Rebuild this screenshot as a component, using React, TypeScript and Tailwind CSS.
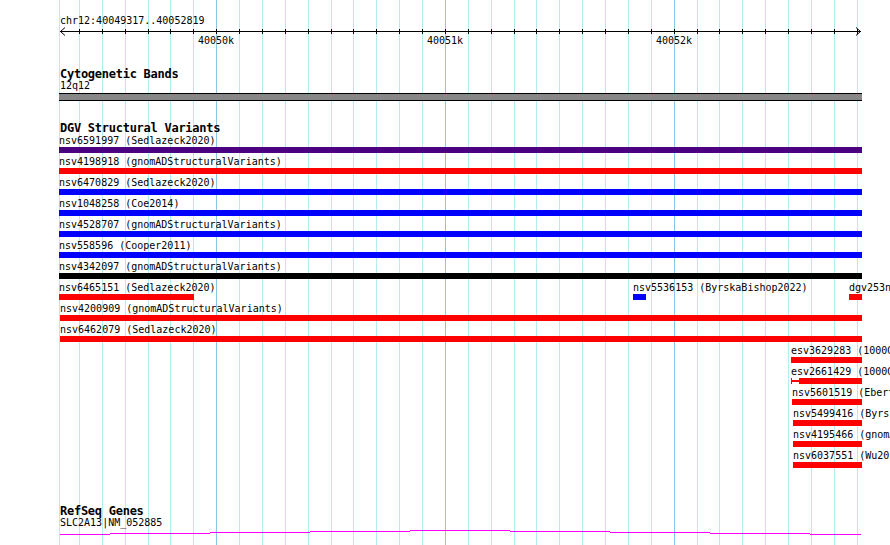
import React from "react";

// visible window
const START = 40049317;
const LEFT = 60;
const RIGHT = 862;
const SCALE = 0.22873; // px per bp

const toX = (bp: number) => Math.round(LEFT + (bp - START) * SCALE);

const minor = Array.from({ length: 35 }, (_, i) => 40049400 + i * 100);
const major = [40050000, 40051000, 40052000];

type Feature = {
  label: string;
  x: number;
  end: number;
  color: string;
  whisker?: number; // thin leading part, up to this x
};

const full = (label: string, color: string, x = 59): Feature[] => [{ label, x, end: RIGHT, color }];

const dgvRows: Feature[][] = [
  full("nsv6591997 (Sedlazeck2020)", "#4b0082"),
  full("nsv4198918 (gnomADStructuralVariants)", "#ff0000"),
  full("nsv6470829 (Sedlazeck2020)", "#0000ff"),
  full("nsv1048258 (Coe2014)", "#0000ff"),
  full("nsv4528707 (gnomADStructuralVariants)", "#0000ff"),
  full("nsv558596 (Cooper2011)", "#0000ff"),
  full("nsv4342097 (gnomADStructuralVariants)", "#000000"),
  [
    { label: "nsv6465151 (Sedlazeck2020)", x: 59, end: 194, color: "#ff0000" },
    { label: "nsv5536153 (ByrskaBishop2022)", x: 633, end: 646, color: "#0000ff" },
    { label: "dgv253n67 (Zarrei2015)", x: 849, end: RIGHT, color: "#ff0000" },
  ],
  full("nsv4200909 (gnomADStructuralVariants)", "#ff0000", 60),
  full("nsv6462079 (Sedlazeck2020)", "#ff0000", 60),
  full("esv3629283 (1000GenomesPhase3)", "#ff0000", 791),
  [{ label: "esv2661429 (1000GenomesPilot)", x: 791, end: RIGHT, color: "#ff0000", whisker: 799 }],
  full("nsv5601519 (Ebert2021)", "#ff0000", 792),
  full("nsv5499416 (ByrskaBishop2022)", "#ff0000", 793),
  full("nsv4195466 (gnomADStructuralVariants)", "#ff0000", 793),
  full("nsv6037551 (Wu2021)", "#ff0000", 793),
];

// gene model drawn as a shallow arch, one px step per 100px
const geneSteps = [
  [60, 110, 534],
  [110, 210, 533],
  [210, 310, 532],
  [310, 410, 531],
  [410, 510, 530],
  [510, 610, 531],
  [610, 710, 532],
  [710, 810, 533],
  [810, 861, 534],
];

function Grid() {
  return (
    <svg className="pointer-events-none absolute inset-0" width={890} height={545} aria-hidden="true">
      <line x1={59.5} x2={59.5} y1={0} y2={545} stroke="#b3edf0" />
      {minor.map(bp => {
        const x = toX(bp) + 0.5;
        const isMajor = major.includes(bp);
        return <line key={bp} x1={x} x2={x} y1={0} y2={545} stroke={isMajor ? "#8cc6e6" : "#b3edf0"} />;
      })}
    </svg>
  );
}

function Ruler() {
  return (
    <svg className="mt-[0px] block" width={890} height={20}>
      <line x1={60} x2={861} y1={4.5} y2={4.5} stroke="#000" />
      <polyline points="65,0.5 60.5,4.5 65,8.5" fill="none" stroke="#000" />
      <polyline points="856,0.5 860.5,4.5 856,8.5" fill="none" stroke="#000" />
      {minor.map(bp => {
        const x = toX(bp) + 0.5;
        return <line key={bp} x1={x} x2={x} y1={2} y2={7} stroke="#000" />;
      })}
      {major.map(bp => (
        <text
          key={bp}
          x={toX(bp)}
          y={17}
          textAnchor="middle"
          fontSize={10}
          fontFamily="'DejaVu Sans Mono', monospace"
          fill="#000"
        >
          {bp / 1000}k
        </text>
      ))}
    </svg>
  );
}

function TrackTitle({ children, className }: { children: React.ReactNode; className?: string }) {
  return (
    <h2 className={`pl-[60px] text-[12px] font-bold leading-[12px] tracking-[-0.26px] text-black ${className ?? ""}`}>
      {children}
    </h2>
  );
}

function FeatureRow({ features }: { features: Feature[] }) {
  return (
    <div className="relative h-[21px]">
      {features.map(f => (
        <div key={f.label} className="absolute top-0" style={{ left: f.x, width: f.end - f.x }}>
          <div className="whitespace-nowrap text-[10px] leading-[12px] text-black">{f.label}</div>
          {f.whisker ? (
            <div className="flex h-[6px] items-center">
              <div className="h-[6px] w-[1px]" style={{ background: f.color }} />
              <div className="h-[2px]" style={{ background: f.color, width: f.whisker - f.x - 1 }} />
              <div className="h-[6px] flex-1" style={{ background: f.color }} />
            </div>
          ) : (
            <div className="h-[6px]" style={{ background: f.color }} />
          )}
        </div>
      ))}
    </div>
  );
}

export default function App() {
  return (
    <div className="relative h-[545px] w-[890px] overflow-hidden bg-white font-['DejaVu_Sans_Mono',monospace] text-black">
      <Grid />
      <div className="relative">
        <div className="pl-[60px] pt-[15px] text-[10px] leading-[12px]">chr12:40049317..40052819</div>
        <Ruler />

        <TrackTitle className="mt-[21px]">Cytogenetic Bands</TrackTitle>
        <div className="pl-[60px] text-[10px] leading-[12px]">12q12</div>
        <div className="ml-[59px] mt-[1px] h-[8px] w-[803px] border-y border-black bg-[#878787]" />

        <TrackTitle className="mt-[21px]">DGV Structural Variants</TrackTitle>
        <div className="mt-[1px]">
          {dgvRows.map((row, i) => (
            <FeatureRow key={i} features={row} />
          ))}
        </div>

        <TrackTitle className="mt-[34px]">RefSeq Genes</TrackTitle>
        <div className="pl-[60px] text-[10px] leading-[12px]">SLC2A13|NM_052885</div>
        <svg className="block" width={890} height={8}>
          {geneSteps.map(([x1, x2, y]) => (
            <line key={x1} x1={x1} x2={x2} y1={y - 529 + 0.5} y2={y - 529 + 0.5} stroke="#ff00ff" />
          ))}
        </svg>
      </div>
    </div>
  );
}
